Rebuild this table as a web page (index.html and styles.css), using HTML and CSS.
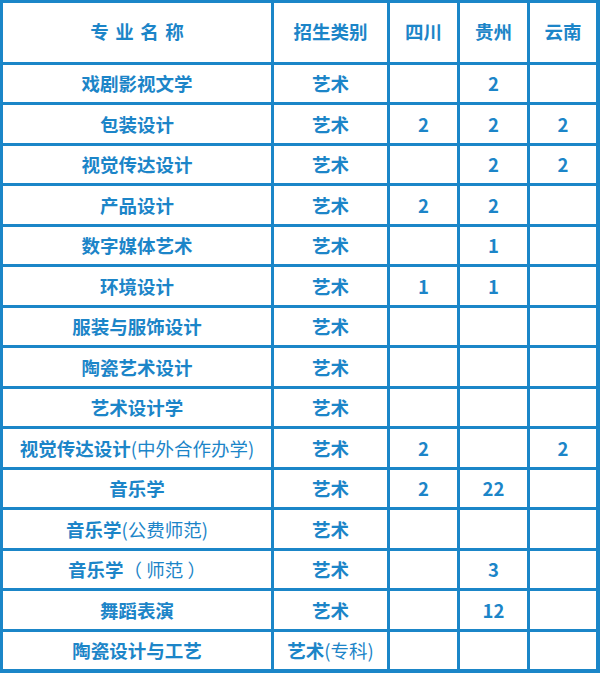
FILE: index.html
```html
<!DOCTYPE html>
<html lang="zh-CN">
<head>
<meta charset="utf-8">
<link rel="stylesheet" href="styles.css">
</head>
<body>
<div class="table">
  <div class="cell head"><span class="spaced">专业名称</span></div>
  <div class="cell head">招生类别</div>
  <div class="cell head">四川</div>
  <div class="cell head">贵州</div>
  <div class="cell head">云南</div>

  <div class="cell">戏剧影视文学</div><div class="cell">艺术</div><div class="cell"></div><div class="cell">2</div><div class="cell"></div>
  <div class="cell">包装设计</div><div class="cell">艺术</div><div class="cell">2</div><div class="cell">2</div><div class="cell">2</div>
  <div class="cell">视觉传达设计</div><div class="cell">艺术</div><div class="cell"></div><div class="cell">2</div><div class="cell">2</div>
  <div class="cell">产品设计</div><div class="cell">艺术</div><div class="cell">2</div><div class="cell">2</div><div class="cell"></div>
  <div class="cell">数字媒体艺术</div><div class="cell">艺术</div><div class="cell"></div><div class="cell">1</div><div class="cell"></div>
  <div class="cell">环境设计</div><div class="cell">艺术</div><div class="cell">1</div><div class="cell">1</div><div class="cell"></div>
  <div class="cell">服装与服饰设计</div><div class="cell">艺术</div><div class="cell"></div><div class="cell"></div><div class="cell"></div>
  <div class="cell">陶瓷艺术设计</div><div class="cell">艺术</div><div class="cell"></div><div class="cell"></div><div class="cell"></div>
  <div class="cell">艺术设计学</div><div class="cell">艺术</div><div class="cell"></div><div class="cell"></div><div class="cell"></div>
  <div class="cell">视觉传达设计<span class="light">(中外合作办学)</span></div><div class="cell">艺术</div><div class="cell">2</div><div class="cell"></div><div class="cell">2</div>
  <div class="cell">音乐学</div><div class="cell">艺术</div><div class="cell">2</div><div class="cell">22</div><div class="cell"></div>
  <div class="cell">音乐学<span class="light">(公费师范)</span></div><div class="cell">艺术</div><div class="cell"></div><div class="cell"></div><div class="cell"></div>
  <div class="cell">音乐学<span class="light">（ 师范 ）</span></div><div class="cell">艺术</div><div class="cell"></div><div class="cell">3</div><div class="cell"></div>
  <div class="cell">舞蹈表演</div><div class="cell">艺术</div><div class="cell"></div><div class="cell">12</div><div class="cell"></div>
  <div class="cell">陶瓷设计与工艺</div><div class="cell">艺术<span class="light">(专科)</span></div><div class="cell"></div><div class="cell"></div><div class="cell"></div>
</div>
</body>
</html>
```
FILE: styles.css
```css
html, body {
  margin: 0;
  padding: 0;
  background: #ffffff;
}
.table {
  box-sizing: border-box;
  width: 600px;
  height: 673px;
  background: #1b86c8;
  padding: 3px 4px 4px 3px;
  display: grid;
  grid-template-columns: 268px 113px 67px 67px 1fr;
  grid-template-rows: 59px repeat(15, 1fr);
  gap: 3px;
  font-family: "Noto Sans CJK SC", "Noto Sans", sans-serif;
  font-weight: 700;
  font-size: 18.5px;
  color: #1c85c8;
}
.cell {
  background: #ffffff;
  display: flex;
  align-items: center;
  justify-content: center;
  white-space: nowrap;
  line-height: 1;
}
.head {
  padding-bottom: 2px;
}
.spaced {
  letter-spacing: 0.35em;
  margin-right: -0.35em;
}
.light {
  font-weight: 400;
}
```
